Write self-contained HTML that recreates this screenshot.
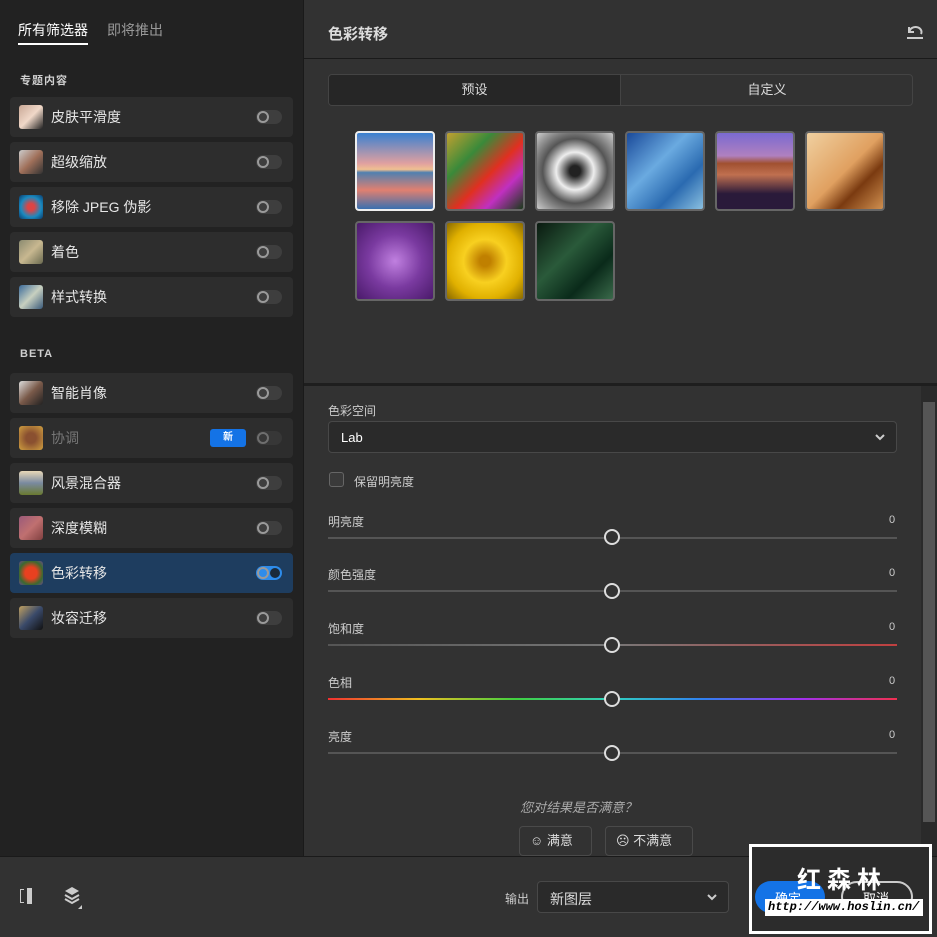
<!DOCTYPE html>
<html><head><meta charset="utf-8"><style>
*{margin:0;padding:0;box-sizing:border-box}
body{width:937px;height:937px;overflow:hidden;background:#323232;font-family:"Liberation Sans","Noto Sans CJK SC",sans-serif;color:#ddd;position:relative}
.a{position:absolute}
#left{left:0;top:0;width:303px;height:856px;background:#222}
.item{position:absolute;left:10px;width:283px;height:40px;background:#2d2d2d;border-radius:4px}
.item .ic{position:absolute;left:9px;top:8px;width:24px;height:24px;border-radius:3px}
.item .t{position:absolute;left:41px;top:10px;font-size:14px;color:#e6e6e6}
.tg{position:absolute;left:246px;top:13px;width:26px;height:14px;border-radius:7px;background:#3e3e3e}
.tg:after{content:"";position:absolute;left:1px;top:1px;width:12px;height:12px;border-radius:50%;border:2px solid #9a9a9a;box-sizing:border-box}
.sec{position:absolute;left:20px;font-size:11px;font-weight:bold;color:#cfcfcf;letter-spacing:1px}
.th{position:absolute;width:80px;height:80px;border:2px solid #666;border-radius:4px}
.lbl{position:absolute;left:328px;font-size:12px;color:#ccc}
.val{position:absolute;left:889px;font-size:11px;color:#ccc}
.tr{position:absolute;left:328px;width:569px;height:2px;background:#555}
.kn{position:absolute;left:604px;width:16px;height:16px;border-radius:50%;border:2px solid #ddd;background:#323232}
</style></head><body>
<div id="left" class="a">
<div class="a" style="left:18px;top:20px;font-size:14px;color:#fff">所有筛选器</div>
<div class="a" style="left:18px;top:43px;width:70px;height:2px;background:#fff"></div>
<div class="a" style="left:107px;top:20px;font-size:14px;color:#999">即将推出</div>
<div class="sec" style="top:72px">专题内容</div>
<div class="item" style="top:97px"><div class="ic" style="background:linear-gradient(135deg,#c9a896,#f0d8c8 50%,#222)"></div><div class="t">皮肤平滑度</div><div class="tg"></div></div>
<div class="item" style="top:142px"><div class="ic" style="background:linear-gradient(135deg,#ccc,#a0705a,#333)"></div><div class="t">超级缩放</div><div class="tg"></div></div>
<div class="item" style="top:187px"><div class="ic" style="background:radial-gradient(circle,#d44 20%,#1a8ac0 60%,#0a3a6a)"></div><div class="t">移除 JPEG 伪影</div><div class="tg"></div></div>
<div class="item" style="top:232px"><div class="ic" style="background:linear-gradient(135deg,#8a8a70,#c8b890,#6a6a50)"></div><div class="t">着色</div><div class="tg"></div></div>
<div class="item" style="top:277px"><div class="ic" style="background:linear-gradient(135deg,#3a6a9a,#c8d0c0,#3a5a7a)"></div><div class="t">样式转换</div><div class="tg"></div></div>
<div class="sec" style="top:348px">BETA</div>
<div class="item" style="top:373px"><div class="ic" style="background:linear-gradient(135deg,#ddd,#7a5a4a,#222)"></div><div class="t">智能肖像</div><div class="tg"></div></div>
<div class="item" style="top:418px"><div class="ic" style="background:radial-gradient(circle,#8a5030 30%,#d0a040)"></div><div class="t" style="color:#777">协调</div><div class="a" style="left:200px;top:11px;width:36px;height:18px;background:#1473e6;border-radius:3px;font-size:10px;color:#fff;text-align:center;line-height:18px;font-weight:bold">新</div><div class="tg" style="opacity:.6"></div></div>
<div class="item" style="top:463px"><div class="ic" style="background:linear-gradient(180deg,#e8d8b8,#7a8aa0 50%,#6a7a30)"></div><div class="t">风景混合器</div><div class="tg"></div></div>
<div class="item" style="top:508px"><div class="ic" style="background:linear-gradient(135deg,#9a5a7a,#c07070,#804040)"></div><div class="t">深度模糊</div><div class="tg"></div></div>
<div class="item" style="top:553px;background:#1e3d5f"><div class="ic" style="background:radial-gradient(circle,#e84020 35%,#3a6a30 70%,#6a4a8a)"></div><div class="t">色彩转移</div><div class="tg" style="background:#2d8ceb"></div><div class="a" style="left:260px;top:15px;width:10px;height:10px;border-radius:50%;background:#1a2a3a"></div></div>
<div class="item" style="top:598px"><div class="ic" style="background:linear-gradient(135deg,#c0a060,#3a4a6a,#111)"></div><div class="t">妆容迁移</div><div class="tg"></div></div>
</div>
<div class="a" style="left:303px;top:0;width:1px;height:856px;background:#1a1a1a"></div>
<div class="a" style="left:328px;top:23px;font-size:15px;font-weight:bold;color:#ddd">色彩转移</div>
<svg class="a" style="left:905px;top:24px" width="20" height="16" viewBox="0 0 20 16"><path d="M4 3v5h5M4.5 8A6 5 0 1 1 16 10" fill="none" stroke="#ccc" stroke-width="2"/><path d="M2 14h16" stroke="#ccc" stroke-width="2"/></svg>
<div class="a" style="left:304px;top:58px;width:633px;height:1px;background:#1a1a1a"></div>
<div class="a" style="left:328px;top:74px;width:585px;height:32px;border:1px solid #444;border-radius:4px;overflow:hidden">
<div class="a" style="left:0;top:0;width:292px;height:30px;background:#262626;border-right:1px solid #444;text-align:center;line-height:30px;font-size:13px">预设</div>
<div class="a" style="left:292px;top:0;width:292px;height:30px;text-align:center;line-height:30px;font-size:13px">自定义</div></div>
<div class="th" style="left:355px;top:131px;border-color:#eee;background:linear-gradient(180deg,#3a80d0,#e0a0a0 40%,#f0c090 48%,#5080b0 52%,#e08070 75%,#3a70b0)"></div>
<div class="th" style="left:445px;top:131px;background:linear-gradient(135deg,#c0a030,#3a8a3a 30%,#e03020 55%,#c030c0 75%,#1a3a1a)"></div>
<div class="th" style="left:535px;top:131px;background:radial-gradient(circle,#222 10%,#eee 35%,#555 60%,#ccc)"></div>
<div class="th" style="left:625px;top:131px;background:linear-gradient(135deg,#1a4a9a,#6aaae0 40%,#2a6ab0 70%,#8ac0e0)"></div>
<div class="th" style="left:715px;top:131px;background:linear-gradient(180deg,#7a6ad0,#b080c0 30%,#a05030 40%,#c07050 55%,#2a1a3a 80%)"></div>
<div class="th" style="left:805px;top:131px;background:linear-gradient(135deg,#f0d0a0,#e0a060 50%,#7a3a10 70%,#d09050)"></div>
<div class="th" style="left:355px;top:221px;background:radial-gradient(circle,#c080e0,#7a3aa0 50%,#4a1a6a)"></div>
<div class="th" style="left:445px;top:221px;background:radial-gradient(circle,#c08000 10%,#f8d020 40%,#e0b000 70%,#8a6a00)"></div>
<div class="th" style="left:535px;top:221px;background:linear-gradient(135deg,#0a1a10,#2a5a3a 40%,#0a2a1a 70%,#3a6a4a)"></div>
<div class="a" style="left:304px;top:383px;width:633px;height:3px;background:#1e1e1e"></div>
<div class="a" style="left:921px;top:386px;width:16px;height:470px;background:#2a2a2a"></div>
<div class="a" style="left:923px;top:402px;width:12px;height:420px;background:#555"></div>
<div class="lbl" style="top:402px">色彩空间</div>
<div class="a" style="left:328px;top:421px;width:569px;height:32px;border:1px solid #484848;border-radius:4px;background:#2a2a2a"><span class="a" style="left:12px;top:8px;font-size:13px;color:#fff">Lab</span><svg class="a" style="right:11px;top:11px" width="10" height="8" viewBox="0 0 10 8"><path d="M1 2l4 4 4-4" fill="none" stroke="#ccc" stroke-width="2"/></svg></div>
<div class="a" style="left:329px;top:472px;width:15px;height:15px;border:1px solid #666;border-radius:3px;background:#3a3a3a"></div>
<div class="lbl" style="left:354px;top:473px">保留明亮度</div>
<div class="lbl" style="top:513px">明亮度</div><div class="val" style="top:514px">0</div><div class="tr" style="top:537px"></div><div class="kn" style="top:529px"></div>
<div class="lbl" style="top:566px">颜色强度</div><div class="val" style="top:567px">0</div><div class="tr" style="top:590px"></div><div class="kn" style="top:583px"></div>
<div class="lbl" style="top:620px">饱和度</div><div class="val" style="top:621px">0</div><div class="tr" style="top:644px;background:linear-gradient(90deg,#555,#777 50%,#c04040)"></div><div class="kn" style="top:637px"></div>
<div class="lbl" style="top:674px">色相</div><div class="val" style="top:675px">0</div><div class="tr" style="top:698px;background:linear-gradient(90deg,#f03030,#f0c020 16%,#40d040 33%,#30d0c0 50%,#3080f0 66%,#a030f0 83%,#f03050)"></div><div class="kn" style="top:691px"></div>
<div class="lbl" style="top:728px">亮度</div><div class="val" style="top:729px">0</div><div class="tr" style="top:752px"></div><div class="kn" style="top:745px"></div>
<div class="a" style="left:520px;top:797px;font-size:13px;color:#aaa;font-style:italic">您对结果是否满意？</div>
<div class="a" style="left:519px;top:826px;width:73px;height:30px;border:1px solid #4a4a4a;border-radius:4px;font-size:13px;line-height:28px;padding-left:10px">☺ 满意</div>
<div class="a" style="left:605px;top:826px;width:88px;height:30px;border:1px solid #4a4a4a;border-radius:4px;font-size:13px;line-height:28px;padding-left:10px">☹ 不满意</div>
<div class="a" style="left:0;top:856px;width:937px;height:1px;background:#1a1a1a"></div>
<div class="a" style="left:20px;top:889px;width:4px;height:14px;border:1px solid #ccc;border-right:none"></div>
<div class="a" style="left:27px;top:888px;width:5px;height:16px;background:#ccc"></div>
<svg class="a" style="left:63px;top:886px" width="22" height="24" viewBox="0 0 22 24"><path d="M9 1l7 4-7 4-7-4z" fill="#ccc"/><path d="M2 9l7 4 7-4M2 13l7 4 7-4" fill="none" stroke="#ccc" stroke-width="2"/><path d="M19 19v4h-4z" fill="#ccc"/></svg>
<div class="a" style="left:505px;top:890px;font-size:12px;color:#ccc">输出</div>
<div class="a" style="left:537px;top:881px;width:192px;height:32px;border:1px solid #484848;border-radius:4px;background:#2a2a2a"><span class="a" style="left:12px;top:7px;font-size:14px">新图层</span><svg class="a" style="right:11px;top:11px" width="10" height="8" viewBox="0 0 10 8"><path d="M1 2l4 4 4-4" fill="none" stroke="#ccc" stroke-width="2"/></svg></div>
<div class="a" style="left:749px;top:844px;width:183px;height:90px;border:3px solid #fff;background:#2c2c2c"></div>
<div class="a" style="left:755px;top:881px;width:70px;height:32px;border-radius:16px;background:#1473e6"></div>
<div class="a" style="left:841px;top:881px;width:72px;height:32px;border-radius:16px;border:2px solid #ccc"></div>
<div class="a" style="left:775px;top:888px;font-size:13px;color:#fff">确定</div>
<div class="a" style="left:863px;top:888px;font-size:13px;color:#fff">取消</div>
<div class="a" style="left:797px;top:860px;font-size:24px;font-weight:bold;color:#fff;letter-spacing:6px">红森林</div>
<div class="a" style="left:765px;top:899px;width:158px;height:17px;background:#fff;color:#000;font-family:'Liberation Mono',monospace;font-style:italic;font-size:12px;line-height:17px;padding-left:3px;font-weight:bold">http://www.hoslin.cn/</div>
</body></html>
